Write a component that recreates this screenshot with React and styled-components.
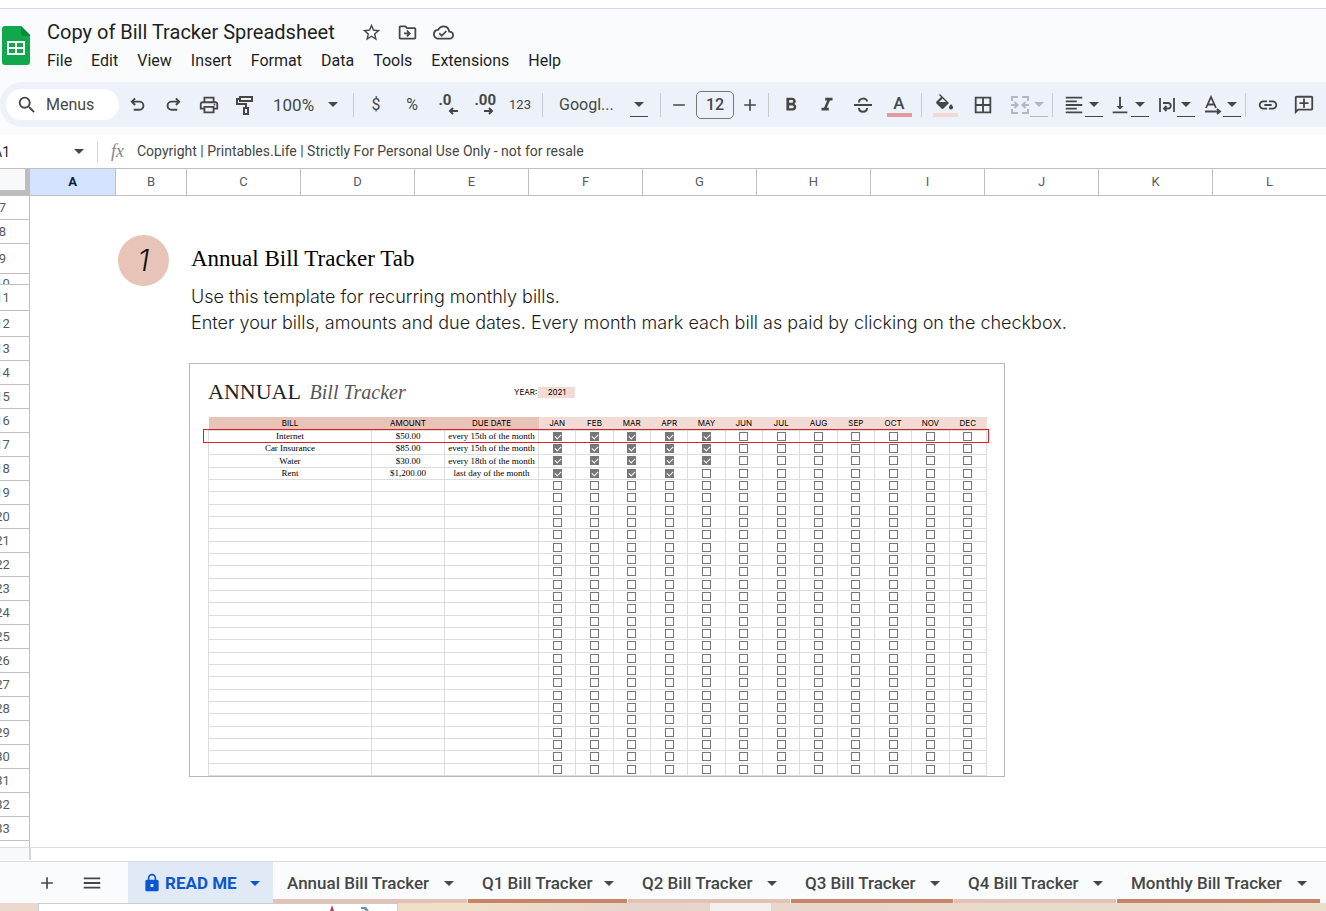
import styled, { createGlobalStyle, css } from "styled-components";
import {
  MdAdd,
  MdBorderAll,
  MdFormatAlignLeft,
  MdFormatBold,
  MdFormatItalic,
  MdLink,
  MdLock,
  MdMenu,
  MdOutlineAddComment,
  MdOutlineCloudDone,
  MdOutlineDriveFileMove,
  MdOutlinePrint,
  MdRemove,
  MdSearch,
  MdStarBorder,
  MdVerticalAlignBottom,
} from "react-icons/md";

const menus = ["File", "Edit", "View", "Insert", "Format", "Data", "Tools", "Extensions", "Help"];

const columns = [
  { name: "A", width: 86 },
  { name: "B", width: 71 },
  ..."CDEFGHIJKL".split("").map((name) => ({ name, width: 114 })),
];

const rowHeights = { 9: 30, 10: 11, 11: 26, 12: 26 };
const rows = Array.from({ length: 28 }, (_, i) => ({
  number: i + 7,
  height: rowHeights[i + 7] || 24,
}));

const months = ["JAN", "FEB", "MAR", "APR", "MAY", "JUN", "JUL", "AUG", "SEP", "OCT", "NOV", "DEC"];

const bills = [
  { name: "Internet", amount: "$50.00", due: "every 15th of the month", paid: 5 },
  { name: "Car Insurance", amount: "$85.00", due: "every 15th of the month", paid: 5 },
  { name: "Water", amount: "$30.00", due: "every 18th of the month", paid: 5 },
  { name: "Rent", amount: "$1,200.00", due: "last day of the month", paid: 4 },
  ...Array.from({ length: 24 }, () => ({ name: "", amount: "", due: "", paid: 0 })),
];

const tabs = [
  { name: "Annual Bill Tracker", color: "#e4c1b6", width: 194 },
  { name: "Q1 Bill Tracker", color: "#c98468", width: 159 },
  { name: "Q2 Bill Tracker", color: "#e4c1b6", width: 162 },
  { name: "Q3 Bill Tracker", color: "#c98468", width: 162 },
  { name: "Q4 Bill Tracker", color: "#e4c1b6", width: 162 },
  { name: "Monthly Bill Tracker", color: "#c98468", width: 203 },
];

const Stroke = ({ size = 20, width = 2, children }) => (
  <svg width={size} height={size} viewBox="0 0 20 20" fill="none" stroke="currentColor" strokeWidth={width}>
    {children}
  </svg>
);

const SheetsLogo = () => (
  <svg width="28" height="40" viewBox="0 0 28 40">
    <path d="M3 0h16l9 9v27a3 3 0 0 1-3 3H3a3 3 0 0 1-3-3V3a3 3 0 0 1 3-3z" fill="#0fa84b" />
    <path d="M19 0l9 9v1h-6a3 3 0 0 1-3-3z" fill="#0b8a3c" />
    <path d="M5 15h18v14H5zM7 17v4h6v-4zM15 17v4h6v-4zM7 23v4h6v-4zM15 23v4h6v-4z" fill="#fff" fillRule="evenodd" />
  </svg>
);

const UndoIcon = () => (
  <Stroke size={19}>
    <path d="M7.500 3.500L4 7l3.500 3.500M4.500 7H12a4 4 0 0 1 0 8.500H6" />
  </Stroke>
);

const RedoIcon = () => (
  <Stroke size={19}>
    <path d="M12.500 3.500L16 7l-3.500 3.500M15.500 7H8a4 4 0 0 0 0 8.500h6" />
  </Stroke>
);

const PaintIcon = () => (
  <Stroke>
    <path d="M5 2h12v4H5zM5 4H2v5h9v4M9 13h4v6H9z" />
  </Stroke>
);

const StrikeIcon = () => (
  <Stroke>
    <path d="M1 10h18M6 7.500C6 2.500 14 2.500 14 6.500M6 13c0 5 8 5 8 0" />
  </Stroke>
);

const FillIcon = () => (
  <svg width="20" height="18" viewBox="0 0 20 18">
    <path d="M5 0l9 9-5.500 5.500a1.500 1.500 0 0 1-2 0L1.500 9.500a1.500 1.500 0 0 1 0-2L6 3 4 1zM7.500 4.500L4 8h7z" fill="currentColor" fillRule="evenodd" />
    <path d="M16 10c1.500 1.800 2 2.600 2 3.400a2 2 0 0 1-4 0c0-.8.500-1.600 2-3.400z" fill="currentColor" />
  </svg>
);

const MergeIcon = () => (
  <Stroke width={2}>
    <path d="M8 2H2v4M2 14v4h6M12 2h6v4M18 14v4h-6M1 10h6M4.500 7L7.500 10l-3 3M19 10h-6M15.500 7L12.500 10l3 3" />
  </Stroke>
);

const WrapIcon = () => (
  <Stroke width={1.8}>
    <path d="M3 3v14M17 3v14M6 8h5a2.500 2.500 0 0 1 0 5.500H7M9.500 11L7 13.500 9.500 16" />
  </Stroke>
);

const RotateIcon = () => (
  <Stroke width={1.8}>
    <path d="M3 13L8 2l5 11M5 9.500h6M2 16.500h14M14 14l3 2.500-3 2.500" />
  </Stroke>
);

const DecimalIcon = ({ digits, more }) => (
  <Decimal>
    {digits}
    <svg width="10" height="8" viewBox="0 0 10 8" fill="none" stroke="currentColor" strokeWidth="2">
      <path d={more ? "M0 4h8M5 1l3 3-3 3" : "M10 4H2M5 1L2 4l3 3"} />
    </svg>
  </Decimal>
);

const Caret = () => (
  <svg width="10" height="5" viewBox="0 0 10 5">
    <path d="M0 0h10L5 5z" fill="currentColor" />
  </svg>
);

const BillTable = () => (
  <TableWrapper>
    <Table>
      <thead>
        <tr>
          <HeadCell $width={163}>BILL</HeadCell>
          <HeadCell $width={73}>AMOUNT</HeadCell>
          <HeadCell $width={94}>DUE DATE</HeadCell>
          {months.map((month) => (
            <HeadCell key={month} $light>{month}</HeadCell>
          ))}
        </tr>
      </thead>
      <tbody>
        {bills.map((bill, i) => (
          <BillRow key={i}>
            <td>{bill.name}</td>
            <td>{bill.amount}</td>
            <td>{bill.due}</td>
            {months.map((month, m) => (
              <td key={month}>
                <Check type="checkbox" defaultChecked={m < bill.paid} aria-label={`${bill.name || "Bill " + (i + 1)} paid in ${month}`} />
              </td>
            ))}
          </BillRow>
        ))}
      </tbody>
    </Table>
    <Highlight />
  </TableWrapper>
);

const App = () => {
  return (
    <Page>
      <GlobalStyle />
      <TopStrip />
      <Header>
        <SheetsLogo />
        <div>
          <TitleRow>
            <Title>Copy of Bill Tracker Spreadsheet</Title>
            <TitleButton aria-label="Star"><MdStarBorder size={21} /></TitleButton>
            <TitleButton aria-label="Move"><MdOutlineDriveFileMove size={21} /></TitleButton>
            <TitleButton aria-label="Saved to Drive"><MdOutlineCloudDone size={21} /></TitleButton>
          </TitleRow>
          <MenuBar>
            {menus.map((menu) => (
              <MenuButton key={menu}>{menu}</MenuButton>
            ))}
          </MenuBar>
        </div>
      </Header>

      <Toolbar>
        <MenusSearch><MdSearch size={22} />Menus</MenusSearch>
        <ToolButton aria-label="Undo"><UndoIcon /></ToolButton>
        <ToolButton aria-label="Redo"><RedoIcon /></ToolButton>
        <ToolButton aria-label="Print"><MdOutlinePrint size={22} /></ToolButton>
        <ToolButton aria-label="Paint format"><PaintIcon /></ToolButton>
        <PickButton $width={86}>100%<Caret /></PickButton>
        <Separator />
        <ToolButton>$</ToolButton>
        <ToolButton>%</ToolButton>
        <ToolButton aria-label="Decrease decimal places"><DecimalIcon digits=".0" /></ToolButton>
        <ToolButton aria-label="Increase decimal places"><DecimalIcon digits=".00" more /></ToolButton>
        <ToolButton $small>123</ToolButton>
        <Separator />
        <PickButton $width={109} $boxed>Googl...<CaretBox><Caret /></CaretBox></PickButton>
        <Separator />
        <ToolButton $width={28} aria-label="Decrease font size"><MdRemove size={20} /></ToolButton>
        <SizeInput defaultValue="12" aria-label="Font size" />
        <ToolButton $width={28} aria-label="Increase font size"><MdAdd size={20} /></ToolButton>
        <Separator />
        <ToolButton aria-label="Bold"><MdFormatBold size={22} /></ToolButton>
        <ToolButton aria-label="Italic"><MdFormatItalic size={22} /></ToolButton>
        <ToolButton aria-label="Strikethrough"><StrikeIcon /></ToolButton>
        <ToolButton aria-label="Text color"><Swatch $color="#e39a9c">A</Swatch></ToolButton>
        <Separator />
        <ToolButton $width={38} aria-label="Fill color"><Swatch $color="#f2d9d5"><FillIcon /></Swatch></ToolButton>
        <ToolButton $width={38} aria-label="Borders"><MdBorderAll size={22} /></ToolButton>
        <SplitButton aria-label="Merge cells" disabled><MergeIcon /><CaretBox><Caret /></CaretBox></SplitButton>
        <Separator />
        <SplitButton aria-label="Horizontal align"><MdFormatAlignLeft size={22} /><CaretBox><Caret /></CaretBox></SplitButton>
        <SplitButton aria-label="Vertical align"><MdVerticalAlignBottom size={22} /><CaretBox><Caret /></CaretBox></SplitButton>
        <SplitButton aria-label="Text wrapping"><WrapIcon /><CaretBox><Caret /></CaretBox></SplitButton>
        <SplitButton aria-label="Text rotation"><RotateIcon /><CaretBox><Caret /></CaretBox></SplitButton>
        <Separator />
        <ToolButton aria-label="Insert link"><MdLink size={22} /></ToolButton>
        <ToolButton aria-label="Insert comment"><CommentIcon size={22} /></ToolButton>
      </Toolbar>

      <FormulaBar>
        <NameBox><span>A1</span><Caret /></NameBox>
        <Fx>fx</Fx>
        <FormulaInput
          aria-label="Formula"
          defaultValue="Copyright | Printables.Life | Strictly For Personal Use Only - not for resale"
        />
      </FormulaBar>

      <ColumnHeads>
        <Corner />
        {columns.map((column) => (
          <ColumnHead key={column.name} $width={column.width} $active={column.name === "A"}>
            {column.name}
          </ColumnHead>
        ))}
      </ColumnHeads>

      <Sheet>
        <RowHeads>
          {rows.map((row) => (
            <RowHead key={row.number} $height={row.height}>{row.number}</RowHead>
          ))}
        </RowHeads>
        <Canvas>
          <StepNumber>1</StepNumber>
          <Step>
            <StepTitle>Annual Bill Tracker Tab</StepTitle>
            <StepText>Use this template for recurring monthly bills.</StepText>
            <StepText>
              Enter your bills, amounts and due dates. Every month mark each bill as paid by clicking on the checkbox.
            </StepText>
            <Tracker>
              <TrackerHeader>
                <TrackerTitle>ANNUAL <em>Bill Tracker</em></TrackerTitle>
                <span>YEAR:</span>
                <Year>2021</Year>
              </TrackerHeader>
              <BillTable />
            </Tracker>
          </Step>
        </Canvas>
      </Sheet>

      <ScrollRow><ScrollCorner /></ScrollRow>

      <TabBar>
        <BarButton aria-label="Add sheet"><MdAdd size={20} /></BarButton>
        <BarButton aria-label="All sheets"><MdMenu size={22} /></BarButton>
        <Tab $active $width={145}><TabLabel><MdLock size={20} />READ ME</TabLabel><Caret /></Tab>
        {tabs.map((tab) => (
          <Tab key={tab.name} $width={tab.width} $color={tab.color}>{tab.name}<Caret /></Tab>
        ))}
      </TabBar>
      <Desktop>
        <Window>
          <svg width="60" height="7" viewBox="0 0 60 7">
            <path d="M9 1l2 6h-4z" fill="#c8375a" />
            <path d="M38 3h5l3 4h-3l-2-2h-3z" fill="#6f9096" />
          </svg>
        </Window>
        <Pane />
      </Desktop>
    </Page>
  );
};

const GlobalStyle = createGlobalStyle`
  * {
    box-sizing: border-box;
  }
  body {
    margin: 0;
    overflow: hidden;
    font-family: Roboto, "Liberation Sans", sans-serif;
    color: #444746;
  }
  button, input {
    font-family: inherit;
    color: inherit;
    background: none;
    border: 0;
    padding: 0;
    margin: 0;
  }
`;

const Page = styled.div`
  display: flex;
  flex-direction: column;
  height: 100vh;
  overflow: hidden;
  background: #f9fbfd;
`;

const TopStrip = styled.div`
  flex: none;
  height: 9px;
  background: #fff;
  border-bottom: 1px solid #d5d8db;
`;

const Header = styled.header`
  display: flex;
  flex: none;
  gap: 17px;
  padding: 9px 2px 8px;

  > svg {
    margin-top: 8px;
  }
`;

const TitleRow = styled.div`
  display: flex;
  align-items: center;
  height: 28px;
`;

const Title = styled.h1`
  margin: 0 19px 0 0;
  font-size: 20px;
  font-weight: 400;
  line-height: 28px;
  color: #1f1f1f;
`;

const TitleButton = styled.button`
  display: flex;
  justify-content: center;
  width: 36px;
`;

const MenuBar = styled.nav`
  display: flex;
  gap: 19px;
  height: 28px;
`;

const MenuButton = styled.button`
  font-size: 16px;
  color: #1f1f1f;
`;

const Toolbar = styled.div`
  display: flex;
  flex: none;
  align-items: center;
  height: 45px;
  padding-left: 6px;
  overflow: hidden;
  background: #edf2fa;
  border-radius: 22px 0 0 22px;
`;

const MenusSearch = styled.button`
  display: flex;
  flex: none;
  align-items: center;
  gap: 8px;
  width: 113px;
  height: 31px;
  padding-left: 10px;
  font-size: 16px;
  background: #fff;
  border-radius: 16px;
`;

const ToolButton = styled.button`
  display: flex;
  flex: none;
  align-items: center;
  justify-content: center;
  width: ${(props) => props.$width || 36}px;
  height: 32px;
  font-size: ${(props) => (props.$small ? 13 : 16)}px;
`;

const PickButton = styled.button`
  display: flex;
  flex: none;
  align-items: center;
  justify-content: space-between;
  width: ${(props) => props.$width}px;
  height: 32px;
  padding: ${(props) => (props.$boxed ? "0 8px 0 12px" : "0 11px 0 10px")};
  font-size: ${(props) => (props.$boxed ? 16 : 17)}px;
`;

const SplitButton = styled.button`
  display: flex;
  flex: none;
  align-items: center;
  justify-content: flex-end;
  width: 46px;
  height: 32px;

  &:disabled {
    color: #b4b8bc;
  }
`;

const CaretBox = styled.span`
  display: flex;
  align-items: center;
  justify-content: center;
  width: 18px;
  height: 24px;
  border-bottom: 1px solid currentColor;
`;

const CommentIcon = styled(MdOutlineAddComment)`
  transform: scaleX(-1);
`;

const Separator = styled.span`
  flex: none;
  width: 1px;
  height: 24px;
  margin: 0 4px;
  background: #c7c9cc;
`;

const Decimal = styled.span`
  display: flex;
  flex-direction: column;
  width: 19px;
  font-size: 15px;
  font-weight: 700;
  line-height: 13px;
  text-align: left;

  svg {
    align-self: flex-end;
  }
`;

const SizeInput = styled.input`
  flex: none;
  width: 38px;
  height: 28px;
  margin: 0 2px 0 3px;
  font-size: 16px;
  font-weight: 500;
  text-align: center;
  border: 1px solid #747775;
  border-radius: 5px;
`;

const Swatch = styled.span`
  display: flex;
  align-items: center;
  justify-content: center;
  width: 25px;
  height: 24px;
  font-size: 17px;
  font-weight: 500;
  border-bottom: 4px solid ${(props) => props.$color};
`;

const FormulaBar = styled.div`
  display: flex;
  flex: none;
  align-items: center;
  height: 33px;
  margin-top: 8px;
  background: #fff;
`;

const NameBox = styled.div`
  display: flex;
  align-items: center;
  justify-content: space-between;
  width: 105px;
  height: 20px;
  margin-left: -7px;
  padding-right: 13px;
  font-size: 14px;
  color: #1f1f1f;
  border-right: 1px solid #d0d2d4;

  svg {
    color: #444746;
  }
`;

const Fx = styled.span`
  width: 39px;
  text-align: center;
  font-family: "Liberation Serif", serif;
  font-size: 18px;
  font-style: italic;
  color: #80868b;
`;

const FormulaInput = styled.input`
  flex: 1;
  padding-bottom: 2px;
  font-size: 14px;
  outline: none;
`;

const ColumnHeads = styled.div`
  display: flex;
  flex: none;
  height: 28px;
  overflow: hidden;
  background: #fff;
  border-top: 1px solid #c0c0c0;
  border-bottom: 1px solid #c0c0c0;
`;

const Corner = styled.div`
  flex: none;
  width: 30px;
  background: #f8f9fa;
  border-right: 5px solid #bdbdbd;
  border-bottom: 5px solid #bdbdbd;
`;

const ColumnHead = styled.div`
  flex: none;
  width: ${(props) => props.$width}px;
  font-size: 13px;
  line-height: 26px;
  text-align: center;
  color: #575b5f;
  border-right: 1px solid #c0c0c0;
  ${(props) =>
    props.$active &&
    css`
      font-weight: 700;
      color: #041e49;
      background: #d3e3fd;
    `}
`;

const Sheet = styled.main`
  display: flex;
  flex: 1;
  min-height: 0;
  overflow: hidden;
  background: #fff;
`;

const RowHeads = styled.div`
  flex: none;
  width: 54px;
  margin-left: -24px;
  border-right: 1px solid #c0c0c0;
`;

const RowHead = styled.div`
  height: ${(props) => props.$height}px;
  overflow: hidden;
  font-size: 13px;
  line-height: ${(props) => Math.max(props.$height, 20)}px;
  text-align: center;
  color: #575b5f;
  border-bottom: 1px solid #c0c0c0;
`;

const Canvas = styled.div`
  display: flex;
  flex: 1;
  align-items: flex-start;
  gap: 20px;
  padding: 39px 20px 0 88px;
`;

const StepNumber = styled.div`
  flex: none;
  width: 51px;
  height: 51px;
  font-family: Inter, sans-serif;
  font-size: 30px;
  font-style: italic;
  font-weight: 300;
  line-height: 51px;
  text-align: center;
  color: #111;
  background: #e8c4b8;
  border-radius: 50%;
`;

const Step = styled.section`
  min-width: 0;
  color: #1b1b1b;
`;

const StepTitle = styled.h2`
  margin: 8px 2px 9px;
  font-family: "Liberation Serif", serif;
  font-size: 23px;
  font-weight: 400;
  line-height: 32px;
  color: #000;
`;

const StepText = styled.p`
  margin: 0 2px;
  font-family: Inter, sans-serif;
  font-size: 18px;
  font-weight: 300;
  line-height: 26px;
  white-space: nowrap;
`;

const Tracker = styled.div`
  max-width: 816px;
  margin-top: 27px;
  padding: 14px 17px 0 18px;
  color: #000;
  border: 1px solid #b7b7b7;
`;

const TrackerHeader = styled.div`
  display: flex;
  align-items: center;
  height: 28px;
  font-family: Inter, sans-serif;
  font-size: 8px;
`;

const TrackerTitle = styled.h3`
  width: 306px;
  margin: 0;
  font-family: "Liberation Serif", serif;
  font-size: 22px;
  font-weight: 400;
  color: #222;

  em {
    margin-left: 4px;
    font-size: 20px;
    color: #555;
  }
`;

const Year = styled.span`
  width: 37px;
  margin-left: 1px;
  line-height: 11px;
  text-align: center;
  background: #f2dbd4;
`;

const TableWrapper = styled.div`
  position: relative;
  margin-top: 11px;
`;

const Table = styled.table`
  width: 100%;
  table-layout: fixed;
  border-collapse: collapse;
  font-family: "Liberation Serif", serif;
  font-size: 9px;
  line-height: 10px;
  text-align: center;
`;

const HeadCell = styled.th`
  width: ${(props) => (props.$width ? props.$width + "px" : "auto")};
  height: 13px;
  padding: 0;
  font-family: Inter, sans-serif;
  font-size: 8px;
  font-weight: 400;
  background: ${(props) => (props.$light ? "#f2dbd4" : "#e8c4b8")};
`;

const BillRow = styled.tr`
  height: 12px;

  &:nth-child(3n) {
    height: 13px;
  }

  td {
    padding: 0;
    white-space: nowrap;
    border: 1px solid #dcdcdc;
  }
`;

const Check = styled.input`
  position: relative;
  display: block;
  width: 9px;
  height: 9px;
  margin: 0 auto;
  appearance: none;
  border: 1px solid #777;

  &:checked {
    background: #777;
  }

  &:checked::after {
    content: "";
    position: absolute;
    top: 0;
    left: 2px;
    width: 3px;
    height: 5px;
    border: solid #fff;
    border-width: 0 1px 1px 0;
    transform: rotate(45deg);
  }
`;

const Highlight = styled.div`
  position: absolute;
  top: 12px;
  right: -2px;
  left: -5px;
  height: 14px;
  border: 1px solid #e02020;
`;

const ScrollRow = styled.div`
  flex: none;
  height: 15px;
  background: #fff;
  border-top: 1px solid #dadce0;
  border-bottom: 1px solid #dadce0;
`;

const ScrollCorner = styled.div`
  width: 31px;
  height: 12px;
  background: #f8f9fa;
  border-right: 2px solid #d5d5d5;
`;

const TabBar = styled.div`
  display: flex;
  flex: none;
  height: 41px;
  padding-left: 24px;
  overflow: hidden;
`;

const BarButton = styled.button`
  display: flex;
  flex: none;
  align-items: center;
  justify-content: center;
  width: 45px;

  & + & {
    margin-right: 14px;
  }
`;

const Tab = styled.button`
  display: flex;
  flex: none;
  align-items: center;
  justify-content: space-between;
  width: ${(props) => props.$width}px;
  padding: 5px 13px 0 14px;
  margin-right: 1px;
  font-size: 17px;
  font-weight: 500;
  white-space: nowrap;
  border-bottom: 4px solid ${(props) => props.$color};
  ${(props) =>
    props.$active &&
    css`
      margin-right: 0;
      font-weight: 700;
      color: #0b57d0;
      background: #e1e9f7;
      border-bottom-color: #e1e9f7;
    `}
`;

const TabLabel = styled.span`
  display: flex;
  align-items: center;
  gap: 3px;
`;

const Desktop = styled.div`
  display: flex;
  flex: none;
  height: 8px;
  padding-left: 38px;
  background: linear-gradient(90deg, #ead8cc, #efe0c8 35%, #e6d5cc 48%, #ebdfcb);
`;

const Window = styled.div`
  display: flex;
  width: 360px;
  padding-left: 284px;
  background: #fff;
  border: 1px solid #ccc;
  border-bottom: 0;
`;

const Pane = styled.div`
  width: 61px;
  margin-left: 312px;
  background: #f3efec;
`;

export default App;
